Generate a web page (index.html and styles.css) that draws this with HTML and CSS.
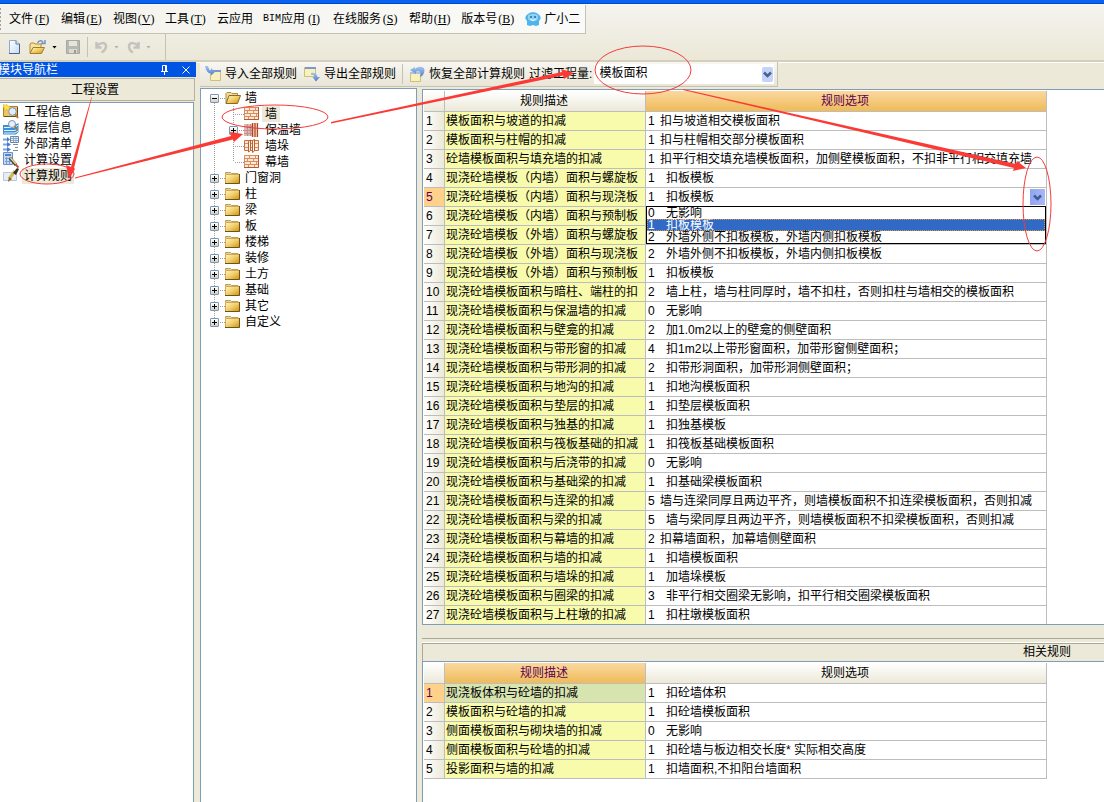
FILE: index.html
```html
<!DOCTYPE html>
<html lang="zh-CN">
<head>
<meta charset="utf-8">
<title>计算规则</title>
<link rel="stylesheet" href="styles.css">
</head>
<body>
<svg class="defs" aria-hidden="true">
  <defs>
    <linearGradient id="gold" x1="0" y1="0" x2="1" y2="1"><stop offset="0" stop-color="#fff6c4"/><stop offset=".5" stop-color="#f0cd68"/><stop offset="1" stop-color="#cf8f10"/></linearGradient>
    <linearGradient id="page" x1="0" y1="0" x2="1" y2="1"><stop offset="0" stop-color="#fff"/><stop offset="1" stop-color="#c5daf3"/></linearGradient>
    <linearGradient id="blue" x1="0" y1="0" x2="0" y2="1"><stop offset="0" stop-color="#a5c4ee"/><stop offset="1" stop-color="#4d7bd0"/></linearGradient>
    <symbol id="folder" viewBox="0 0 16 16"><path d="M.5 4V2.500H5.500L6.500 3.500H13.500" fill="#e8cf80" stroke="#b7a060"/><path d="M.5 4.500H14.500V13.500H.5Z" fill="url(#gold)" stroke="#cfa94b"/><path d="M14.500 4V13.500H0" fill="none" stroke="#6b5320"/></symbol>
    <symbol id="folder-open" viewBox="0 0 16 16"><path d="M1 13V3.500L2 2.500H6L7 3.500H12.500V6" fill="#f2dc93" stroke="#a98d42"/><path d="M1 13.500L4 5.500H15.500L12.500 13.500Z" fill="url(#gold)" stroke="#8a6a20"/></symbol>
    <symbol id="brick" viewBox="0 0 16 16"><path d="M.5 1.500H14.500V13.500H.5Z" fill="#fde8d6" stroke="#d98e62"/><path d="M14.500 1V13.500H0" fill="none" stroke="#b8572b"/><path d="M1 4.500H14M1 7.500H14M1 10.500H14M5.500 2V4M11.500 2V4M3.500 5V7M9.500 5V7M6.500 8V10M12.500 8V10M4.500 11V13M10.500 11V13" stroke="#d98e62" fill="none"/></symbol>
    <symbol id="insulated" viewBox="0 0 16 16"><path d="M0 2H8V14H0Z" fill="#e2b9b2"/><path d="M0 4.500H8M0 8.500H8M0 11.500H8M3.500 2V14M6.500 2V14" stroke="#c0908d" fill="none"/><path d="M8 1H14V15H8Z" fill="#f6cba8"/><path d="M8.500 1V15M11 1V15M13.500 1V15" stroke="#a8482b" stroke-width="1.200"/></symbol>
    <symbol id="pier" viewBox="0 0 16 16"><path d="M.5 2.500H14.500V12.500H.5Z" fill="#fde8d6" stroke="#c9703f"/><path d="M1 5.500H14M1 9.500H14" stroke="#d98e62"/><path d="M4.500 3.500L6.500 2V12.500L4.500 14ZM8.500 2.500L10.500 1.500V13L8.500 14.500Z" fill="#fff6ee" stroke="#b85f34"/></symbol>
    <symbol id="import" viewBox="0 0 16 16"><path d="M5.500 4.500H15.500V14.500H5.500Z" fill="#f7f1bd" stroke="#cfbe78"/><path d="M6 4H16V6H6Z" fill="#7896d8"/><path d="M0 0L3 0C4 3 4 4 6 4.500V2L10 6L6 9.500V7.500C2 7 1 4 0 0Z" fill="url(#blue)"/></symbol>
    <symbol id="export" viewBox="0 0 16 16"><path d="M.5 1.500H11.500V10.500H.5Z" fill="#f7f1bd" stroke="#cfbe78"/><path d="M1 1H12V3H1Z" fill="#7896d8"/><path d="M7 7C11 6 13 8 13.500 11H16L12 15.500L8.500 11H10.500C10 9.500 9 8.500 7 9Z" fill="url(#blue)"/></symbol>
    <symbol id="restore" viewBox="0 0 16 16"><path d="M1.500 6.500H11.500V15.500H1.500Z" fill="#f7f1bd" stroke="#cfbe78"/><path d="M1 6H12V8H1Z" fill="#b1c2d8"/><path d="M1 4L6 1V3C9 0 15 0 15.500 4C15.500 7 14 10 11 11C12 8 12 6 10 5.500C8.500 5 8 5.500 7 6V8Z" fill="url(#blue)"/></symbol>
  </defs>
</svg>

<div class="frame-edge"></div>
<header class="bars">
  <nav class="menubar">
    <button>文件<span class="key">(<u>F</u>)</span></button>
    <button>编辑<span class="key">(<u>E</u>)</span></button>
    <button>视图<span class="key">(<u>V</u>)</span></button>
    <button>工具<span class="key">(<u>T</u>)</span></button>
    <button>云应用</button>
    <button><span class="bim">BIM</span>应用<span class="key">(<u>I</u>)</span></button>
    <button>在线服务<span class="key">(<u>S</u>)</span></button>
    <button>帮助<span class="key">(<u>H</u>)</span></button>
    <button>版本号<span class="key">(<u>B</u>)</span></button>
    <button class="user"><svg width="16" height="16" viewBox="0 0 16 16"><path d="M3 3C5 .5 11 .5 13 3C15 4 16 6 15.500 8L14 10V14L11 15L8 14L5 15L2 14V10L.5 8C0 6 1 4 3 3Z" fill="#4db4ec"/><path d="M3 4C5 2.500 11 2.500 13 4V8C11 11 5 11 3 8Z" fill="#8fd2f5"/><circle cx="6" cy="6" r="1" fill="#1d6ea5"/><circle cx="10" cy="6" r="1" fill="#1d6ea5"/><path d="M5.500 8.500Q8 10.500 10.500 8.500" fill="none" stroke="#fff"/></svg>广小二</button>
  </nav>
  <div class="toolbar">
    <button aria-label="新建"><svg width="16" height="16" viewBox="0 0 16 16"><path d="M4.500 1.500H11L14.500 5V14.500H4.500Z" fill="url(#page)" stroke="#8fa9cc"/><path d="M11 1.500V5H14.500" fill="#dce9f7" stroke="#5f7fa8"/><path d="M14.500 5V14.500H4" fill="none" stroke="#4a648a"/></svg></button>
    <button class="open" aria-label="打开"><svg width="17" height="16" viewBox="0 0 17 16"><path d="M1 14V5L2 4H5L6 5H12V8" fill="#f6e3a0" stroke="#b28b35"/><path d="M1 14.500L4 8.500H15.500L12.500 14.500Z" fill="url(#gold)" stroke="#a47f2a"/><path d="M8.500 4C10 1 13 1 14 3.500M16 1V4.500H12" fill="none" stroke="#6f93bf" stroke-width="1.500"/></svg></button>
    <button class="arrow" aria-label="打开列表"></button>
    <button class="save" aria-label="保存"><svg width="16" height="16" viewBox="0 0 16 16"><path d="M1.500 1.500H14.500V14.500H1.500Z" fill="#b8b8b3" stroke="#a8a8a3"/><path d="M4 2H12V7H4Z" fill="#e6e4dd"/><path d="M4 10H12V14H4Z" fill="#dad9d3"/><path d="M9 11H11V14H9Z" fill="#9a9a96"/></svg></button>
    <span class="divider"></span>
    <button class="undo" aria-label="撤销"><svg width="13" height="16" viewBox="0 0 13 16"><path d="M1.500 3V8.500H6.500M2 8C4 3 11 3 11 7C11 10 9 12 6.500 13.500" fill="none" stroke="#c3c2bd" stroke-width="2.500"/></svg></button>
    <button class="arrow off" aria-label="撤销列表"></button>
    <button aria-label="重做"><svg width="13" height="16" viewBox="0 0 13 16"><path d="M11.500 3V8.500H6.500M11 8C9 3 2 3 2 7C2 10 3 12 6 13.500" fill="none" stroke="#c3c2bd" stroke-width="2.500"/></svg></button>
    <button class="arrow off" aria-label="重做列表"></button>
  </div>
</header>

<main class="workspace">
  <aside class="sidebar">
    <div class="dock-title"><span>模块导航栏</span>
      <button aria-label="固定"><svg width="7" height="10" viewBox="0 0 7 10"><path d="M1.500 6V.5H5.500V6M4.500 1V6M0 6.500H7M3.500 7V10" fill="none" stroke="#fff"/></svg></button>
      <button aria-label="关闭"><svg width="8" height="8" viewBox="0 0 8 8"><path d="M.5 .5L7.500 7.500M7.500 .5L.5 7.500" stroke="#fff"/></svg></button>
    </div>
    <button class="section">工程设置</button>
    <ul class="nav">
      <li><svg width="16" height="16" viewBox="0 0 16 16"><path d="M.5 2.500H14.500V12.500H.5Z" fill="#efc562" stroke="#a98231"/><path d="M14.500 3V12.500H1" fill="none" stroke="#6b4d14"/><path d="M0 0L2 1.500L3.500 0L4.500 2L7 2L6 4L7 7L4 5.500L1 7L1.500 4L0 3Z" fill="#ffe14a" stroke="#dba81c" stroke-width=".5"/><circle cx="9.500" cy="7.500" r="3.800" fill="#deedff" stroke="#7d93b3"/><path d="M12.500 10.500L15 14" stroke="#b5703a" stroke-width="2"/></svg><a href="#">工程信息</a></li>
      <li><svg width="16" height="16" viewBox="0 0 16 16"><path d="M0 5H12L15.500 3V12L13 14.500H0Z" fill="#3b8fd6"/><path d="M1 7.500H12L15 5M1 10.500H12L15 8M1 13H12L15 11" stroke="#e2f3ff" fill="none"/><circle cx="9" cy="4" r="3.500" fill="#e6f1ff" stroke="#7d93b3"/><path d="M11.500 6.500L14.500 9.500" stroke="#b5703a" stroke-width="2"/></svg><a href="#">楼层信息</a></li>
      <li><svg width="16" height="16" viewBox="0 0 16 16"><path d="M7.500 .5H15.500V6.500H7.500Z" fill="#f2f6fb" stroke="#6585ad"/><path d="M8 2.500H15M8 4.500H15M10.500 1V6M13 1V6" stroke="#90a5c4"/><path d="M10 8.500H15M12 11.500H15M10 14.500H15" stroke="#7f8896"/><path d="M0 3.500H4M0 8.500H4M0 13.500H4" stroke="#7da0e0" stroke-width="2"/><path d="M4 1L7 3.500L4 6ZM4 6L8 8.500L4 11ZM4 11L8 13.500L4 16Z" fill="#4779cf"/></svg><a href="#">外部清单</a></li>
      <li><svg width="16" height="16" viewBox="0 0 16 16"><path d="M.5 .5H9.500V12.500H.5Z" fill="#c5daf5" stroke="#6c8fc9"/><path d="M2 2H8V4H2Z" fill="#5580cc"/><path d="M2 6.500H8M2 9.500H8M3.500 5V12M6.500 5V12" stroke="#7d9ed2"/><path d="M7 6L13 13" stroke="#3f3d35" stroke-width="3"/><path d="M7.500 6L13 12" stroke="#f2d98c" stroke-width="1.500"/><path d="M12.500 12.500L15.500 15.500" stroke="#c9503c" stroke-width="2"/></svg><a href="#">计算设置</a></li>
      <li><svg width="16" height="16" viewBox="0 0 16 16"><path d="M.5 4.500H13.500V12.500H.5Z" fill="#e6edf4" stroke="#bcc7d3"/><path d="M6 11L12 3" stroke="#d4b654" stroke-width="3"/><path d="M10 5L14 0L16 1L13 7Z" fill="#332e28"/><path d="M5 14L6 9L9 11Z" fill="#7d6c33"/></svg><a href="#" class="picked">计算规则</a></li>
    </ul>
  </aside>

  <section class="content">
    <div class="rulebar">
      <button><svg width="16" height="16"><use href="#import"/></svg>导入全部规则</button>
      <button><svg width="16" height="16"><use href="#export"/></svg>导出全部规则</button>
      <span class="divider"></span>
      <button><svg width="16" height="16"><use href="#restore"/></svg>恢复全部计算规则</button>
      <label for="filter">过滤工程量:</label>
      <span class="combo"><select id="filter"><option>模板面积</option></select><svg class="chev" width="11" height="15" viewBox="0 0 11 15"><path d="M2 5.500L5.500 9L9 5.500" fill="none" stroke="#4d6185" stroke-width="2.500"/></svg></span>
    </div>
    <div class="panes">
      <ul class="tree">
        <li><div class="node"><button class="box" aria-label="收起"></button><i></i><svg width="16" height="16"><use href="#folder-open"/></svg><span>墙</span></div>
          <ul>
            <li class="node leaf"><i></i><svg width="16" height="16"><use href="#brick"/></svg><span class="picked">墙</span></li>
            <li class="node"><button class="box plus" aria-label="展开"></button><i></i><svg width="16" height="16"><use href="#insulated"/></svg><span>保温墙</span></li>
            <li class="node leaf"><i></i><svg width="16" height="16"><use href="#pier"/></svg><span>墙垛</span></li>
            <li class="node leaf"><i></i><svg width="16" height="16"><use href="#brick"/></svg><span>幕墙</span></li>
          </ul>
        </li>
        <li class="node"><button class="box plus" aria-label="展开"></button><i></i><svg width="16" height="16"><use href="#folder"/></svg><span>门窗洞</span></li>
        <li class="node"><button class="box plus" aria-label="展开"></button><i></i><svg width="16" height="16"><use href="#folder"/></svg><span>柱</span></li>
        <li class="node"><button class="box plus" aria-label="展开"></button><i></i><svg width="16" height="16"><use href="#folder"/></svg><span>梁</span></li>
        <li class="node"><button class="box plus" aria-label="展开"></button><i></i><svg width="16" height="16"><use href="#folder"/></svg><span>板</span></li>
        <li class="node"><button class="box plus" aria-label="展开"></button><i></i><svg width="16" height="16"><use href="#folder"/></svg><span>楼梯</span></li>
        <li class="node"><button class="box plus" aria-label="展开"></button><i></i><svg width="16" height="16"><use href="#folder"/></svg><span>装修</span></li>
        <li class="node"><button class="box plus" aria-label="展开"></button><i></i><svg width="16" height="16"><use href="#folder"/></svg><span>土方</span></li>
        <li class="node"><button class="box plus" aria-label="展开"></button><i></i><svg width="16" height="16"><use href="#folder"/></svg><span>基础</span></li>
        <li class="node"><button class="box plus" aria-label="展开"></button><i></i><svg width="16" height="16"><use href="#folder"/></svg><span>其它</span></li>
        <li class="node"><button class="box plus" aria-label="展开"></button><i></i><svg width="16" height="16"><use href="#folder"/></svg><span>自定义</span></li>
      </ul>

      <div class="grids">
        <div class="grid">
          <table class="rules clipped">
            <colgroup><col class="c-num"><col class="c-desc"><col class="c-opt"></colgroup>
            <thead><tr><th></th><th>规则描述</th><th class="hot">规则选项</th></tr></thead>
            <tbody>
              <tr><th>1</th><td>模板面积与坡道的扣减</td><td><b class="near">1</b>扣与坡道相交模板面积</td></tr>
              <tr><th>2</th><td>模板面积与柱帽的扣减</td><td><b class="near">1</b>扣与柱帽相交部分模板面积</td></tr>
              <tr><th>3</th><td>砼墙模板面积与填充墙的扣减</td><td><b class="near">1</b>扣平行相交填充墙模板面积，加侧壁模板面积，不扣非平行相交填充墙</td></tr>
              <tr><th>4</th><td>现浇砼墙模板（内墙）面积与螺旋板</td><td><b>1</b>扣板模板</td></tr>
              <tr><th class="current">5</th><td>现浇砼墙模板（内墙）面积与现浇板</td><td class="editing">
                <div class="editor"><b>1</b><input type="text" value="扣板模板" aria-label="规则选项" autofocus><button aria-label="展开选项"><svg width="11" height="15" viewBox="0 0 11 15"><path d="M2 5.500L5.500 9L9 5.500" fill="none" stroke="#3f5b9c" stroke-width="2.500"/></svg></button></div>
                <ul class="choices" role="listbox"><li role="option"><b>0</b>无影响</li><li role="option" class="on" aria-selected="true"><b>1</b>扣板模板</li><li role="option"><b>2</b>外墙外侧不扣板模板，外墙内侧扣板模板</li></ul></td></tr>
              <tr><th>6</th><td>现浇砼墙模板（内墙）面积与预制板</td><td></td></tr>
              <tr><th>7</th><td>现浇砼墙模板（外墙）面积与螺旋板</td><td></td></tr>
              <tr><th>8</th><td>现浇砼墙模板（外墙）面积与现浇板</td><td><b>2</b>外墙外侧不扣板模板，外墙内侧扣板模板</td></tr>
              <tr><th>9</th><td>现浇砼墙模板（外墙）面积与预制板</td><td><b>1</b>扣板模板</td></tr>
              <tr><th>10</th><td>现浇砼墙模板面积与暗柱、端柱的扣</td><td><b>2</b>墙上柱，墙与柱同厚时，墙不扣柱，否则扣柱与墙相交的模板面积</td></tr>
              <tr><th>11</th><td>现浇砼墙模板面积与保温墙的扣减</td><td><b>0</b>无影响</td></tr>
              <tr><th>12</th><td>现浇砼墙模板面积与壁龛的扣减</td><td><b>2</b>加1.0m2以上的壁龛的侧壁面积</td></tr>
              <tr><th>13</th><td>现浇砼墙模板面积与带形窗的扣减</td><td><b>4</b>扣1m2以上带形窗面积，加带形窗侧壁面积；</td></tr>
              <tr><th>14</th><td>现浇砼墙模板面积与带形洞的扣减</td><td><b>2</b>扣带形洞面积，加带形洞侧壁面积；</td></tr>
              <tr><th>15</th><td>现浇砼墙模板面积与地沟的扣减</td><td><b>1</b>扣地沟模板面积</td></tr>
              <tr><th>16</th><td>现浇砼墙模板面积与垫层的扣减</td><td><b>1</b>扣垫层模板面积</td></tr>
              <tr><th>17</th><td>现浇砼墙模板面积与独基的扣减</td><td><b>1</b>扣独基模板</td></tr>
              <tr><th>18</th><td>现浇砼墙模板面积与筏板基础的扣减</td><td><b>1</b>扣筏板基础模板面积</td></tr>
              <tr><th>19</th><td>现浇砼墙模板面积与后浇带的扣减</td><td><b>0</b>无影响</td></tr>
              <tr><th>20</th><td>现浇砼墙模板面积与基础梁的扣减</td><td><b>1</b>扣基础梁模板面积</td></tr>
              <tr><th>21</th><td>现浇砼墙模板面积与连梁的扣减</td><td><b class="near">5</b>墙与连梁同厚且两边平齐，则墙模板面积不扣连梁模板面积，否则扣减</td></tr>
              <tr><th>22</th><td>现浇砼墙模板面积与梁的扣减</td><td><b>5</b>墙与梁同厚且两边平齐，则墙模板面积不扣梁模板面积，否则扣减</td></tr>
              <tr><th>23</th><td>现浇砼墙模板面积与幕墙的扣减</td><td><b class="near">2</b>扣幕墙面积，加幕墙侧壁面积</td></tr>
              <tr><th>24</th><td>现浇砼墙模板面积与墙的扣减</td><td><b>1</b>扣墙模板面积</td></tr>
              <tr><th>25</th><td>现浇砼墙模板面积与墙垛的扣减</td><td><b>1</b>加墙垛模板</td></tr>
              <tr><th>26</th><td>现浇砼墙模板面积与圈梁的扣减</td><td><b>3</b>非平行相交圈梁无影响，扣平行相交圈梁模板面积</td></tr>
              <tr><th>27</th><td>现浇砼墙模板面积与上柱墩的扣减</td><td><b>1</b>扣柱墩模板面积</td></tr>
            </tbody>
          </table>
        </div>
        <div class="track"></div>
        <h2 class="caption">相关规则</h2>
        <div class="grid related">
          <table class="rules">
            <colgroup><col class="c-num"><col class="c-desc"><col class="c-opt"></colgroup>
            <thead><tr><th></th><th class="hot">规则描述</th><th>规则选项</th></tr></thead>
            <tbody>
              <tr><th class="current">1</th><td class="focus">现浇板体积与砼墙的扣减</td><td><b>1</b>扣砼墙体积</td></tr>
              <tr><th>2</th><td>模板面积与砼墙的扣减</td><td><b>1</b>扣砼墙模板面积</td></tr>
              <tr><th>3</th><td>侧面模板面积与砌块墙的扣减</td><td><b>0</b>无影响</td></tr>
              <tr><th>4</th><td>侧面模板面积与砼墙的扣减</td><td><b>1</b>扣砼墙与板边相交长度* 实际相交高度</td></tr>
              <tr><th>5</th><td>投影面积与墙的扣减</td><td><b>1</b>扣墙面积,不扣阳台墙面积</td></tr>
            </tbody>
          </table>
        </div>
      </div>
    </div>
  </section>
</main>

<svg class="notes" width="1104" height="802" viewBox="0 0 1104 802" aria-hidden="true">
  <g fill="none" stroke="#f33b3b">
    <ellipse cx="47" cy="174" rx="27" ry="10"/>
    <ellipse cx="275" cy="117" rx="53" ry="12"/>
    <ellipse cx="643" cy="70" rx="48" ry="24"/>
    <ellipse cx="1037" cy="204" rx="14" ry="47"/>
  </g>
  <g fill="#fb3a36">
    <path d="M91.500 97L92 97L74 168L75 169L69 179L66 165L71 167Z"/>
    <path d="M75 177.500L231 136L230 132L243 134L234 142L233 139.500L75 178.500Z"/>
    <path d="M331 122L562 72L561 69L574 73L564 79L563 75.500L331 123.500Z"/>
    <path d="M683 89L1016 164L1017 161L1026 168L1013 171L1014 168L683 90Z"/>
  </g>
</svg>
</body>
</html>
```
FILE: styles.css
```css
* { box-sizing: border-box; }

body {
  margin: 0;
  height: 100vh;
  display: flex;
  flex-direction: column;
  overflow: hidden;
  position: relative;
  background: #ece9d8;
  color: #000;
  font: 12px/16px "Liberation Sans", "Noto Sans CJK SC", sans-serif;
}

ul { list-style: none; margin: 0; padding: 0; }
svg { display: block; flex: none; }
b { font-weight: normal; }

button {
  font: inherit;
  color: inherit;
  background: none;
  border: 0;
  padding: 0;
  flex: none;
  white-space: nowrap;
}

.defs { position: absolute; width: 0; height: 0; }
.notes { position: absolute; left: 0; top: 0; z-index: 2; pointer-events: none; }

.frame-edge {
  height: 5px;
  flex: none;
  background: linear-gradient(#0a62f0 0 3px, #0046c8 3px 4px, #f8f8f4 4px);
}

/* Menu and main toolbar */
.bars {
  flex: none;
  display: flex;
  flex-direction: column;
  align-items: flex-start;
  height: 57px;
  background: linear-gradient(#f4f3ee, #ebe8d8);
  border-bottom: 2px solid #d2cfbd;
  box-shadow: 0 1px #fff;
}

.menubar {
  display: flex;
  align-items: center;
  gap: 10px;
  height: 29px;
  padding: 0 5px 0 9px;
  background:
    repeating-linear-gradient(#a5a294 0 2px, transparent 2px 4px) 0 3px / 1px 22px no-repeat,
    linear-gradient(90deg, #f3f2ec, #fafaf8);
  border-right: 1px solid #c5c2b2;
  border-bottom: 1px solid #c5c2b2;
}

.menubar button { display: flex; align-items: center; height: 16px; }
.key { width: 18px; text-align: center; font-family: "Liberation Serif", serif; }
.bim { width: 18px; font: 10px/16px "Liberation Mono", monospace; }
.menubar .user { gap: 3px; }

.toolbar {
  display: flex;
  align-items: center;
  height: 26px;
  width: 166px;
  padding-left: 5px;
  border-right: 1px solid #c5c2b2;
}

.toolbar button + button { margin-left: 8px; }
.toolbar .arrow { width: 5px; height: 3px; margin-left: 6px; background: #000; clip-path: polygon(0 0, 100% 0, 50% 100%); }
.toolbar .arrow.off { background: #b4b3ad; }
.toolbar .divider { margin: 0 7px 0 6px; }
.divider { flex: none; width: 1px; height: 20px; background: #c5c2b2; }

/* Work area */
.workspace { flex: 1; display: flex; min-height: 0; gap: 4px; }

.sidebar { width: 196px; flex: none; display: flex; flex-direction: column; }

.dock-title {
  display: flex;
  align-items: center;
  gap: 14px;
  height: 15px;
  padding-right: 6px;
  background: #0054e3;
  color: #fff;
}

.dock-title span { flex: 1; text-indent: -2px; }

.section {
  height: 23px;
  margin: 1px 1px 1px 0;
  padding-right: 4px;
  border: 1px solid #b5b2a2;
  border-left: 0;
  background: #ece9d8;
}

.nav {
  flex: 1;
  margin-right: 2px;
  padding-top: 1px;
  background: #fff;
  border: solid #7f9db9;
  border-width: 1px 1px 0 0;
}

.nav li { display: flex; align-items: center; height: 16px; padding-left: 3px; gap: 3px; }
.nav a { color: #000; text-decoration: none; padding: 0 2px; line-height: 16px; }
.picked { background: #ece9d8; }

.content { flex: 1; min-width: 0; display: flex; flex-direction: column; }

.rulebar {
  display: flex;
  align-items: center;
  align-self: flex-start;
  width: 578px;
  height: 25px;
  padding-left: 5px;
  background: linear-gradient(#f7f6f1, #e9e6d7);
  border-right: 1px solid #c5c2b2;
  border-bottom: 1px solid #c5c2b2;
}

.rulebar button { display: flex; align-items: center; gap: 4px; }
.rulebar button + button { margin-left: 7px; }
.rulebar .divider { margin: 0 6px; }
.rulebar label { margin-left: 4px; white-space: nowrap; }

.combo { flex: 1; display: flex; align-items: center; position: relative; margin: 0 3px 0 2px; background: #fff; height: 20px; }
.combo select { appearance: none; width: 100%; height: 20px; border: 0; padding: 0 5px 3px; background: none; font: inherit; color: #000; }
.chev { position: absolute; right: 1px; pointer-events: none; border-radius: 2px; background: #c3d3fb; }

.panes { flex: 1; display: flex; min-height: 0; gap: 5px; padding-top: 1px; }

/* Tree */
.tree {
  width: 217px;
  flex: none;
  padding: 1px 0 0 9px;
  border: solid #7f9db9;
  border-width: 1px 1px 0 1px;
  background: repeating-linear-gradient(#a09f96 0 1px, transparent 1px 2px) 13px 12px / 1px 224px no-repeat, #fff;
}

.tree ul {
  padding-left: 19px;
  background: repeating-linear-gradient(#a09f96 0 1px, transparent 1px 2px) 23px 0 / 1px 56px no-repeat;
}

.node { display: flex; align-items: center; height: 16px; }
.node i { width: 6px; height: 1px; flex: none; background: repeating-linear-gradient(90deg, transparent 0 1px, #a09f96 1px 2px); }
.leaf i { width: 10px; margin-left: 5px; }
.node span { line-height: 16px; padding: 0 3px; margin-left: 1px; }
.tree ul span { margin-left: 2px; }

.box {
  width: 9px;
  height: 9px;
  border: 1px solid #7898b5;
  border-radius: 1px;
  background: linear-gradient(#000, #000) center / 5px 1px no-repeat, linear-gradient(#fff, #d5d0c2);
}

.plus {
  background: linear-gradient(#000, #000) center / 5px 1px no-repeat, linear-gradient(#000, #000) center / 1px 5px no-repeat, linear-gradient(#fff, #d5d0c2);
}

/* Rule tables */
.grids { flex: 1; min-width: 0; display: flex; flex-direction: column; padding-top: 1px; }

.grid {
  flex: none;
  padding: 1px 0 0 1px;
  background: #fff;
  border: solid #7f9db9;
  border-width: 1px 0 1px 1px;
}

.related { flex: 1; border-bottom: 0; overflow: hidden; }

.rules { width: 623px; table-layout: fixed; border-spacing: 0; }
.c-num { width: 21px; }
.c-desc { width: 201px; }
.c-opt { width: 401px; }

.rules th, .rules td {
  height: 19px;
  padding: 0 0 0 2px;
  border: solid #bdbdbd;
  border-width: 0 1px 1px 0;
  line-height: 18px;
  font-weight: normal;
  text-align: left;
  white-space: nowrap;
}

.rules thead th { height: 21px; padding: 0 2px 0 0; line-height: 20px; text-align: center; background: linear-gradient(#fff, #ece9d8); }
.rules tbody th { background: linear-gradient(90deg, #fff, #ece9d8); }
.rules thead .hot { color: #5c0057; background: linear-gradient(#fad8a0, #efbb5a); }
.rules tbody .current { color: #5c0057; background: #ffd18a; }
.rules td:nth-child(2) { padding-left: 1px; background: #f7fbab; overflow: hidden; }
.rules td.focus { background: #d8e4b0; }
.rules td b, .choices b { display: inline-block; width: 18px; }
.rules td b.near { width: 12px; }
.clipped tbody tr:last-child > * { height: 18px; border-bottom: 0; }

.rules .editing { position: relative; }
.editor { display: flex; align-items: center; height: 18px; }
.editor input { flex: 1; min-width: 0; border: 0; padding: 0; outline: 0; height: 16px; font: inherit; background: none; }
.editor button { width: 15px; height: 16px; margin-right: 1px; display: grid; place-items: center; background: linear-gradient(90deg, #8ea5ee, #a9b8f5); }

.choices {
  position: absolute;
  left: 0;
  right: 0;
  top: 18px;
  z-index: 1;
  background: #fff;
  border: 1px solid #000;
}

.choices li { height: 12px; line-height: 12px; padding-left: 1px; }
.choices .on { color: #fff; background: #316ac5; outline: 1px dotted #d9963e; outline-offset: -1px; }

/* Scroll strip and heading between the tables */
.track {
  flex: none;
  height: 18px;
  background: linear-gradient(#ece9d8 13px, #aca899 13px 14px, #ece9d8 14px 17px, #fff 17px);
}

.caption {
  flex: none;
  margin: 0;
  height: 18px;
  padding-right: 33px;
  border: solid #aca899;
  border-width: 1px 0 0 1px;
  text-align: right;
  font: inherit;
}
```
